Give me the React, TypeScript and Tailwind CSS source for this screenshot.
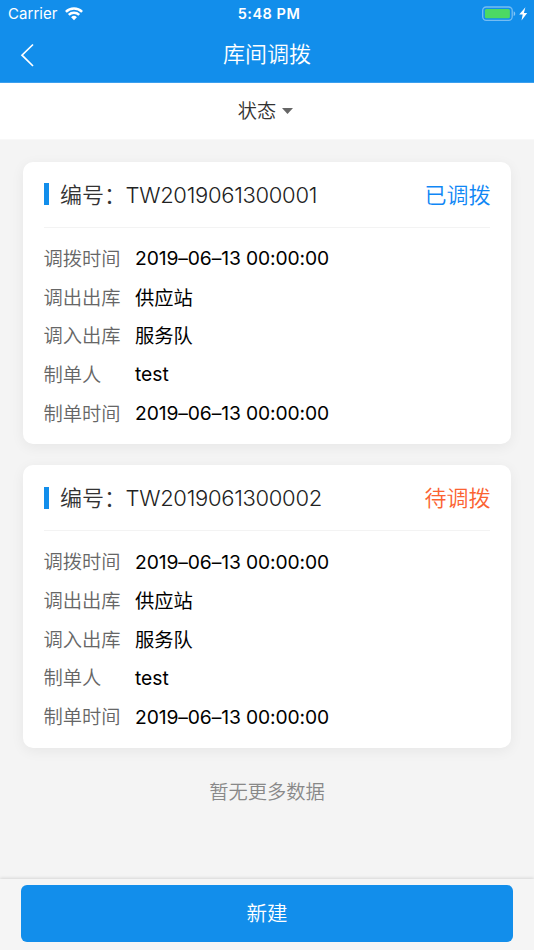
const FONT = "font-['Inter','Noto_Sans_CJK_SC',sans-serif]";

type Transfer = {
  code: string;
  status: string;
  statusClass: string;
  rows: { label: string; value: string; valueClass: string }[];
};

const DATE = 'tracking-[-0.12px]';
const CJK = 'pt-px';

const details = [
  { label: '调拨时间', value: '2019–06–13 00:00:00', valueClass: DATE },
  { label: '调出出库', value: '供应站', valueClass: CJK },
  { label: '调入出库', value: '服务队', valueClass: CJK },
  { label: '制单人', value: 'test', valueClass: '' },
  { label: '制单时间', value: '2019–06–13 00:00:00', valueClass: DATE },
];

const transfers: Transfer[] = [
  {
    code: 'TW2019061300001',
    status: '已调拨',
    statusClass: 'text-[#1087f5]',
    rows: details,
  },
  {
    code: 'TW2019061300002',
    status: '待调拨',
    statusClass: 'text-[#fb6331]',
    rows: details,
  },
];

function StatusBar() {
  return (
    <div className="grid h-7 grid-cols-3 items-center text-[15px] leading-7">
      <div className="flex items-center gap-[7px] pl-2">
        <span className="font-[370] tracking-[0.05px]">Carrier</span>
        <svg width="18" height="14" viewBox="0 0 18 14" fill="none" stroke="currentColor" strokeWidth="2.5">
          <path d="M0.9 4.8a11.5 11.5 0 0 1 16.2 0" />
          <path d="M3.8 7.8a7.4 7.4 0 0 1 10.4 0" />
          <path d="M9 13.2 6.1 10.3a4.1 4.1 0 0 1 5.8 0Z" fill="currentColor" stroke="none" />
        </svg>
      </div>
      <div className="pl-[4px] text-center text-[14.5px] font-semibold tracking-[0.5px]">5:48 PM</div>
      <div className="flex items-center justify-end pr-[6px]">
        <svg width="46" height="16" viewBox="0 0 46 16">
          <rect x="0.7" y="1" width="29.5" height="13.3" rx="3.5" fill="none" stroke="#fff" strokeOpacity="0.42" strokeWidth="1.3" />
          <rect x="2.9" y="3" width="25" height="9.3" rx="1.5" fill="#4cd964" />
          <path d="M31.7 5.2c2 .8 2 4 0 4.8Z" fill="#fff" fillOpacity="0.5" />
          <path d="M43.4 1.2 37.2 8.5h3.5L39.5 14.6 45.2 6.9h-3.3Z" fill="#fff" />
        </svg>
      </div>
    </div>
  );
}

function TransferCard({ item }: { item: Transfer }) {
  return (
    <article className="h-[282.5px] rounded-[10px] bg-white px-[20.5px] shadow-[0_3px_14px_rgba(0,0,0,0.06)]">
      <header className="mr-px flex h-[66px] items-center whitespace-nowrap border-b border-[#f3f3f3] text-[22px] font-[350]">
        <span className="h-[22px] w-[5.5px] bg-[#128eeb]" />
        <span className="ml-[11px] w-[65.5px] pt-[2px] text-[#333]">编号：</span>
        <span className="pt-[2px] tracking-[-0.3px] text-[#222]">{item.code}</span>
        <span className={`-mr-px ml-auto pt-[2px] ${item.statusClass}`}>{item.status}</span>
      </header>
      <dl className="pt-[12px] text-[19.3px] font-[350]">
        {item.rows.map((row) => (
          <div key={row.label} className="flex h-[38.7px] items-center">
            <dt className="w-[91.5px] pt-px text-[#666]">{row.label}</dt>
            <dd className={`font-[370] text-black ${row.valueClass}`}>{row.value}</dd>
          </div>
        ))}
      </dl>
    </article>
  );
}

export default function App() {
  return (
    <div className={`flex h-[950px] w-[534px] flex-col overflow-hidden bg-[#f4f4f4] ${FONT}`}>
      <header className="h-[83px] border-b border-[#3b9fee] bg-[#128eeb] text-white">
        <StatusBar />
        <div className="grid h-[54px] grid-cols-[60px_1fr_60px] items-center">
          <button className="pl-5" aria-label="返回">
            <svg width="15" height="24" viewBox="0 0 15 24" fill="none" stroke="currentColor" strokeWidth="1.7">
              <path d="M13 1.5 2 12.2 13 23" />
            </svg>
          </button>
          <h1 className="pb-[2px] text-center text-[22px] font-[350] leading-[52px]">库间调拨</h1>
        </div>
      </header>

      <button className="flex h-[57px] shrink-0 items-center justify-center gap-[6px] border-b border-[#f8f8f8] bg-white pr-[3px] text-[19.2px] font-[350] text-[#333]">
        <span className="pt-px">状态</span>
        <svg width="11" height="6" viewBox="0 0 11 6">
          <path d="M0 0h11L5.5 6Z" fill="#666" />
        </svg>
      </button>

      <main className="flex flex-1 flex-col gap-[21px] px-[23px] pt-[21.5px]">
        {transfers.map((item) => (
          <TransferCard key={item.code} item={item} />
        ))}
        <p className="pt-[8px] text-center text-[19.3px] font-[350] leading-[30px] text-[#888]">暂无更多数据</p>
      </main>

      <footer className="h-[71px] shrink-0 bg-[#f5f5f5] px-[21px] pt-[6px] shadow-[0_-1px_3px_rgba(0,0,0,0.12)]">
        <button className="h-[57px] w-full rounded-[6px] bg-[#128eeb] pt-px text-[20.5px] font-[350] text-white">新建</button>
      </footer>
    </div>
  );
}
